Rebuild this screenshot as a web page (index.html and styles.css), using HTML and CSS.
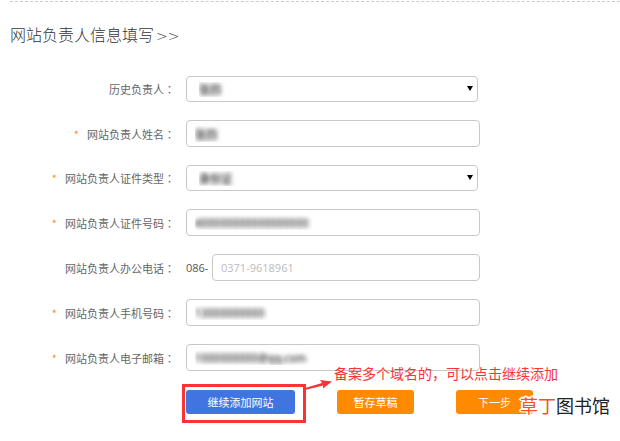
FILE: index.html
```html
<!DOCTYPE html>
<html lang="zh-CN">
<head>
    <meta charset="UTF-8">
    <meta name="viewport" content="width=device-width, initial-scale=1.0">
    <title>网站负责人信息填写</title>
    <link rel="stylesheet" href="styles.css">
</head>
<body>
<div class="page-wrap">
    <h1 class="page-title">网站负责人信息填写<span class="more">&gt;&gt;</span></h1>
    <form class="owner-form">
        <div class="form-row">
            <label for="history">历史负责人<span class="colon" lang="zh-TW">：</span></label>
            <div class="field select-wrap">
                <select id="history" class="masked"><option>张四</option></select>
            </div>
        </div>
        <div class="form-row">
            <label for="name"><span class="star">*</span>网站负责人姓名<span class="colon" lang="zh-TW">：</span></label>
            <div class="field"><input id="name" class="masked" type="text" value="张四"></div>
        </div>
        <div class="form-row">
            <label for="id-type"><span class="star">*</span>网站负责人证件类型<span class="colon" lang="zh-TW">：</span></label>
            <div class="field select-wrap">
                <select id="id-type" class="masked"><option>身份证</option></select>
            </div>
        </div>
        <div class="form-row">
            <label for="id-number"><span class="star">*</span>网站负责人证件号码<span class="colon" lang="zh-TW">：</span></label>
            <div class="field"><input id="id-number" class="masked" type="text" value="400000000000000000"></div>
        </div>
        <div class="form-row">
            <label for="phone">网站负责人办公电话<span class="colon" lang="zh-TW">：</span></label>
            <div class="field">
                <span class="prefix">086-</span>
                <input id="phone" type="text" placeholder="0371-9618961">
            </div>
        </div>
        <div class="form-row">
            <label for="mobile"><span class="star">*</span>网站负责人手机号码<span class="colon" lang="zh-TW">：</span></label>
            <div class="field"><input id="mobile" class="masked" type="text" value="13000000000"></div>
        </div>
        <div class="form-row">
            <label for="email"><span class="star">*</span>网站负责人电子邮箱<span class="colon" lang="zh-TW">：</span></label>
            <div class="field"><input id="email" class="masked" type="text" value="1000000000@qq.com"></div>
        </div>
        <div class="button-row">
            <div class="add-wrap">
                <button type="button" class="btn btn-add">继续添加网站</button>
                <div class="mark-box"></div>
                <svg class="mark-arrow" width="28" height="12" viewBox="0 0 28 12">
                    <path d="M0 9 L17 4 L15 1 L27 2.5 L18 9.5 L18 6.5 L0 11 Z" fill="#f93336"/>
                </svg>
                <span class="mark-text">备案多个域名的，可以点击继续添加</span>
            </div>
            <button type="button" class="btn">暂存草稿</button>
            <div class="next-wrap">
                <button type="button" class="btn">下一步</button>
                <span class="watermark"><span class="watermark-red">草丁</span>图书馆</span>
            </div>
        </div>
    </form>
</div>
</body>
</html>
```
FILE: styles.css
```css
body{
    margin:0px;
    background-color:#fff;
    color:#555;
    font-family:"Noto Sans CJK SC", "Noto Sans", sans-serif;
    font-size:11px;
}
.page-wrap{
    margin:1px 0px 0px 10px;
    padding-bottom:27px;
    border-top:1px dashed #ccc;
}
.page-title{
    margin:20px 0px 30px 0px;
    font-size:16px;
    line-height:24px;
    font-weight:300;
    color:#333;
}
.more{
    margin-left:2px;
    font-family:"DejaVu Sans", sans-serif;
    font-size:14px;
    line-height:16px;
}
.form-row{
    display:flex;
    align-items:center;
    margin-bottom:18px;
}
.form-row label{
    flex:none;
    width:165px;
    margin-right:11px;
    text-align:right;
    line-height:16px;
    color:#666;
}
.colon{
    font-family:"Noto Sans CJK TC", sans-serif;
}
.star{
    margin-right:8px;
    color:#ff8a3c;
}
.field{
    display:flex;
    align-items:center;
    flex:1;
    max-width:294px;
}
.prefix{
    width:26px;
    font-family:"Open Sans", sans-serif;
    white-space:nowrap;
}
.field input, .field select{
    flex:1;
    min-width:0px;
    height:27px;
    box-sizing:border-box;
    margin:0px;
    padding:0px 8px;
    border:1px solid #c8c8c8;
    border-radius:4px;
    background-color:#fff;
    color:#555;
    font-family:"Open Sans", "Noto Sans CJK SC", sans-serif;
    font-size:11px;
}
.field input::placeholder{
    color:#bbb;
}
.select-wrap{
    position:relative;
    max-width:292px;
}
.field select{
    height:26px;
    padding-left:12px;
    appearance:none;
}
.select-wrap::after{
    content:"";
    position:absolute;
    right:5px;
    top:10px;
    border:3px solid transparent;
    border-top:5px solid #000;
    border-bottom:0px;
    pointer-events:none;
}
.field .masked{
    color:transparent;
    text-shadow:0px 0px 4px #555, 0px 0px 5px #777;
}

/* buttons */
.button-row{
    display:flex;
    gap:42px;
    margin:19px 0px 0px 176px;
}
.btn{
    width:77px;
    height:24px;
    padding:0px;
    border:0px;
    border-radius:3px;
    background-color:#ff8a00;
    color:#fff;
    font-family:inherit;
    font-size:11px;
    white-space:nowrap;
}
.btn-add{
    width:109px;
    background-color:#4074e1;
}
.add-wrap, .next-wrap{
    position:relative;
}
.mark-box{
    position:absolute;
    top:-6px;
    left:-4px;
    width:124px;
    height:39px;
    box-sizing:border-box;
    border:3px solid #f93336;
    pointer-events:none;
}
.mark-arrow{
    position:absolute;
    top:-11px;
    left:119px;
}
.mark-text{
    position:absolute;
    top:-27px;
    left:148px;
    font-size:14px;
    line-height:20px;
    color:#f93336;
    white-space:nowrap;
}
.watermark{
    position:absolute;
    top:2px;
    left:64px;
    font-size:18px;
    line-height:26px;
    color:#222;
    white-space:nowrap;
    text-shadow:1px 1px #fff, -1px -1px #fff, 1px -1px #fff, -1px 1px #fff, -2px 0px #fff, 0px -2px #fff;
}
.watermark-red{
    color:#f4511e;
}
```
